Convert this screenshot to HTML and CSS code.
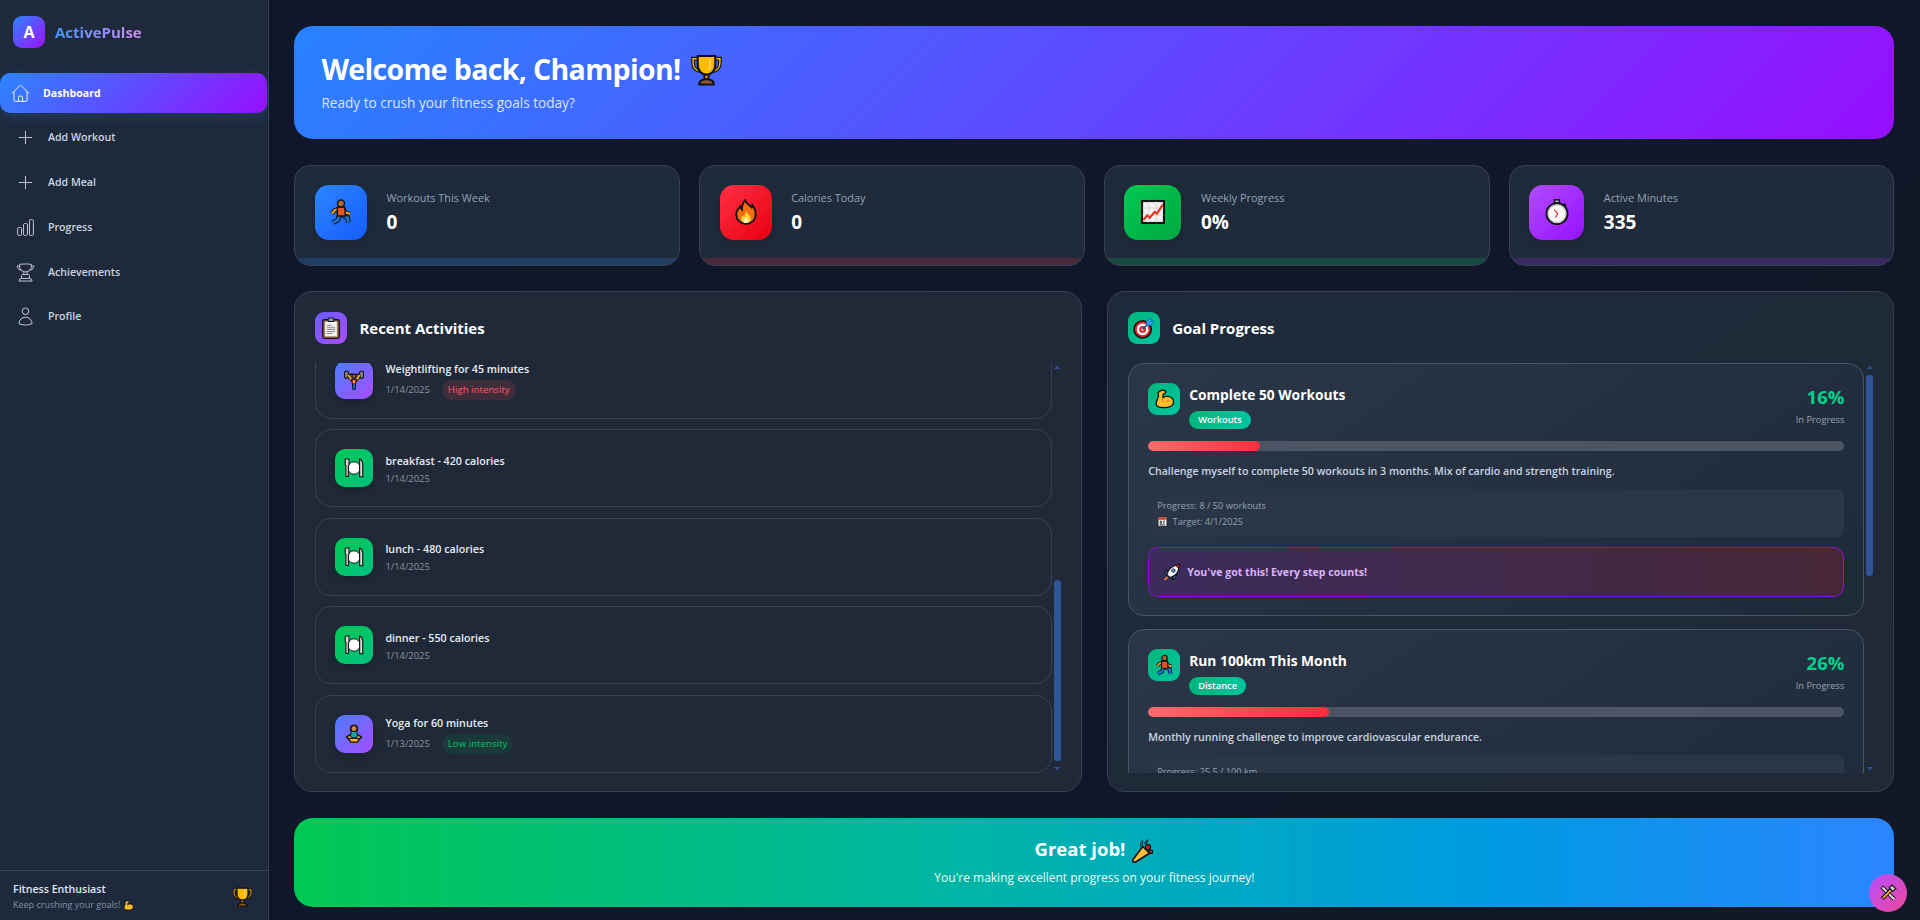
FILE: index.html
```html
<!DOCTYPE html>
<html lang="en">
  <head>
    <meta charset="UTF-8" />
    <meta name="viewport" content="width=device-width, initial-scale=1" />
    <title>ActivePulse</title>
    <link rel="stylesheet" href="styles.css">
  </head>
  <body>
    <!-- Emoji drawn as symbols, no emoji font in the sandbox -->
    <svg class="sprite" aria-hidden="true">
      <symbol id="e-trophy" viewBox="0 0 32 32">
        <path d="M8 5H3v4c0 5 3 8 7 8M24 5h5v4c0 5-3 8-7 8" fill="none" stroke="#111" stroke-width="3.6"/>
        <path d="M8 5H3v4c0 5 3 8 7 8M24 5h5v4c0 5-3 8-7 8" fill="none" stroke="#fcb900" stroke-width="1.4"/>
        <path d="M14 18h4v7h-4z" fill="#e89a00" stroke="#111" stroke-width="1.8"/>
        <path d="M7.5 2.5h17V11c0 6-4 9.5-8.5 9.5S7.5 17 7.5 11z" fill="#fcb900" stroke="#111" stroke-width="2"/>
        <path d="M19.5 5v6c0 2-.6 3.5-1.5 4.5" fill="none" stroke="#ffe28a" stroke-width="1.2"/>
        <path d="M9 30c0-3.5 2.5-5 7-5s7 1.5 7 5z" fill="#8d5a2b" stroke="#111" stroke-width="2"/>
      </symbol>
      <symbol id="e-runner" viewBox="0 0 32 32">
        <path d="M13 12l-5 2-3 4M19 12l3 5 5 1" fill="none" stroke="#111" stroke-width="5"/>
        <path d="M13 12l-5 2-3 4M19 12l3 5 5 1" fill="none" stroke="#f2a31b" stroke-width="2.6"/>
        <path d="M14 20l-2 6-6 3M18 20l6 3 1 6" fill="none" stroke="#111" stroke-width="6"/>
        <path d="M14 20l-2 6-6 3M18 20l6 3 1 6" fill="none" stroke="#1873d3" stroke-width="3.6"/>
        <path d="M11.5 10h9l1 11h-10z" fill="#ea5420" stroke="#111" stroke-width="1.8"/>
        <circle cx="16" cy="5.5" r="4.2" fill="#b06a30" stroke="#111" stroke-width="1.8"/>
      </symbol>
      <symbol id="e-fire" viewBox="0 0 32 32">
        <path d="M15 1.5c1 4 5 6 8 9 1-1 1-2 1-3 3 4 4 8 4 11 0 7-5 12-12 12S4 25.5 4 19c0-4 2-7 5-10 0 2 1 3 2 4 0-5 1-8 4-11.500z" fill="#f26d0f" stroke="#111" stroke-width="2.2"/>
        <path d="M16 15c1 3 6 5 6 10 0 3-3 4.5-6 4.5S10 28 10 25c0-3 2-4 3-5 0 1 .5 2 1 2 .5-2 1-4 2-7z" fill="#ffd23a"/>
        <path d="M16 22c1 2 3 3 3 5 0 1.5-1.5 2.500-3 2.500s-3-1-3-2.500c0-2 2-3 3-5z" fill="#fff3b0"/>
      </symbol>
      <symbol id="e-chart" viewBox="0 0 32 32">
        <rect x="2.5" y="2.5" width="27" height="27" fill="#f2f2f2" stroke="#111" stroke-width="2.6"/>
        <path d="M11 3v26M20 3v26M3 11h26M3 20h26" stroke="#cfcfcf" stroke-width="1"/>
        <path d="M4 26l5-6 3 3 6-7 3 2 7-11" fill="none" stroke="#e5341d" stroke-width="2.6"/>
      </symbol>
      <symbol id="e-watch" viewBox="0 0 32 32">
        <rect x="13" y="1" width="6" height="4" fill="#bdbdbd" stroke="#111" stroke-width="1.8"/>
        <path d="M24 6l2.5 2.5" stroke="#111" stroke-width="3"/>
        <circle cx="16" cy="18" r="13" fill="#c9c9c9" stroke="#111" stroke-width="2.2"/>
        <circle cx="16" cy="18" r="10" fill="#fafafa"/>
        <path d="M12.5 13l4.5 5-3 5" fill="none" stroke="#d8392b" stroke-width="1.4"/>
      </symbol>
      <symbol id="e-clipboard" viewBox="0 0 32 32">
        <rect x="4" y="4" width="24" height="27" rx="2.5" fill="#a97c50" stroke="#111" stroke-width="2"/>
        <rect x="7.5" y="7" width="17" height="21" fill="#f4f4f4"/>
        <path d="M10 12h7M10 15h12M10 18h12M10 21h12M10 24h8" stroke="#8c8c8c" stroke-width="1.5"/>
        <rect x="12" y="1.5" width="8" height="5" rx="1" fill="#9aa0a6" stroke="#111" stroke-width="1.5"/>
      </symbol>
      <symbol id="e-target" viewBox="0 0 32 32">
        <circle cx="14" cy="18" r="12.5" fill="#e3262b" stroke="#111" stroke-width="2.4"/>
        <circle cx="14" cy="18" r="8.5" fill="#fff"/>
        <circle cx="14" cy="18" r="5" fill="#e3262b"/>
        <circle cx="14" cy="18" r="1.8" fill="#fff"/>
        <path d="M14 18L24 8" stroke="#0e5a96" stroke-width="2.4"/>
        <path d="M20 12V6l6-5v5h5l-5 6z" fill="#2aa3ee" stroke="#1672b8" stroke-width="1.2"/>
      </symbol>
      <symbol id="e-lifter" viewBox="0 0 32 32">
        <path d="M5 7h22" stroke="#111" stroke-width="2.4"/>
        <rect x="1" y="2" width="6" height="11" rx="1.5" fill="#8a8a8a" stroke="#111" stroke-width="1.8"/>
        <rect x="25" y="2" width="6" height="11" rx="1.5" fill="#8a8a8a" stroke="#111" stroke-width="1.8"/>
        <path d="M7 8l6 9M25 8l-6 9" stroke="#111" stroke-width="5.4"/>
        <path d="M7 8l6 9M25 8l-6 9" stroke="#f7b524" stroke-width="3"/>
        <circle cx="16" cy="10" r="3.2" fill="#9a5a2a" stroke="#111" stroke-width="1.5"/>
        <path d="M11.5 15h9l-2 7h-5z" fill="#e2262b" stroke="#111" stroke-width="1.5"/>
        <path d="M13.5 22h5l-.5 9h-4z" fill="#1b6fc2" stroke="#111" stroke-width="1.5"/>
        <path d="M16 16.5v5" stroke="#f7d21f" stroke-width="2.4"/>
      </symbol>
      <symbol id="e-plate" viewBox="0 0 32 32">
        <circle cx="16" cy="16" r="10" fill="#fff" stroke="#111" stroke-width="1.6"/>
        <path d="M2 1.5v9c0 1.5 1 2 1 2v17h4v-17s1-.5 1-2v-9z" fill="#d8d8d8" stroke="#111" stroke-width="1.8"/>
        <path d="M25 1.5c3.5 1 5 5 5 10.500v18h-5z" fill="#d8d8d8" stroke="#111" stroke-width="1.8"/>
      </symbol>
      <symbol id="e-yoga" viewBox="0 0 32 32">
        <path d="M16 13L4 21l7 6h10l7-6z" fill="#f7b524" stroke="#111" stroke-width="2.2"/>
        <path d="M11.5 12h9l1 8-5.5 3-5.5-3z" fill="#16a79a" stroke="#111" stroke-width="1.5"/>
        <path d="M10.5 4c1-3 10-3 11 0l.5 7h-12z" fill="#3a2412" stroke="#111" stroke-width="1.5"/>
        <circle cx="16" cy="7.5" r="3.8" fill="#c98a4a"/>
        <path d="M7 24c4-2 14-2 18 0l-4 5H11z" fill="#f7b524" stroke="#111" stroke-width="2"/>
      </symbol>
      <symbol id="e-muscle" viewBox="0 0 32 32">
        <path d="M9 4c3-2 8-2 9 1 0 3-3 3-4 4l-.5 5c3.5-3 10.5-3 14.5 1 3 4 2 10-2 12-6 3-16 3-21 0-2-2-2-6 0-10l2-6-1-3c0-2 1-3 3-4z" fill="#fbbf2d" stroke="#111" stroke-width="2"/>
        <path d="M13.5 14c-1 3-1 5 0 7M18 20c2-1.5 5-1.5 7 0" fill="none" stroke="#c98800" stroke-width="1.5"/>
      </symbol>
      <symbol id="e-rocket" viewBox="0 0 32 32">
        <path d="M9 13L3 16l3 6 3-2zM19 23l-3 6 6-2 2-6z" fill="#2a7fd4" stroke="#111" stroke-width="1.8"/>
        <path d="M7 21C8 12 16 4 29 3c0 13-7 20-16 23z" fill="#f6f6f6" stroke="#111" stroke-width="2"/>
        <path d="M22 3.8c2-.5 4.5-.8 7-.8 0 2.5-.3 5-.9 7.300z" fill="#e3262b" stroke="#111" stroke-width="1.5"/>
        <circle cx="18.5" cy="13.5" r="3" fill="#4aa8ef" stroke="#111" stroke-width="1.5"/>
        <path d="M8 25l-5 5" stroke="#f28a1b" stroke-width="3.4"/>
      </symbol>
      <symbol id="e-calendar" viewBox="0 0 32 32">
        <rect x="3" y="3" width="26" height="27" fill="#f4f4f4" stroke="#222" stroke-width="2.4"/>
        <rect x="4" y="4" width="24" height="7" fill="#d8392b"/>
        <path d="M8 15h5v3.5H8M13 18.5V23H8M18 15h5M20 15v8M8 26h16" fill="none" stroke="#222" stroke-width="2.4"/>
      </symbol>
      <symbol id="e-popper" viewBox="0 0 32 32">
        <path d="M17 10l9 9L7 31c-2.5.5-4-1-3-3.5z" fill="#fbbf3a" stroke="#111" stroke-width="2.2"/>
        <circle cx="24" cy="11" r="3.4" fill="#c81e24" stroke="#111" stroke-width="1.6"/>
        <circle cx="28" cy="17" r="2.4" fill="#c81e24" stroke="#111" stroke-width="1.4"/>
        <path d="M15 10c-1-3 2-4 1-8M20 7c1-3 3-3 3-6" fill="none" stroke="#111" stroke-width="3.2"/>
        <path d="M15 10c-1-3 2-4 1-8M20 7c1-3 3-3 3-6" fill="none" stroke="#1d9bd8" stroke-width="1.2"/>
      </symbol>
      <symbol id="e-tools" viewBox="0 0 32 32">
        <path d="M5 5l22 22" stroke="#111" stroke-width="7"/>
        <path d="M6 6l21 21" stroke="#e2e2e2" stroke-width="3.6"/>
        <path d="M24 7L6 26" stroke="#111" stroke-width="6.6"/>
        <path d="M23 9L7 25" stroke="#f2a31b" stroke-width="3.4"/>
        <path d="M18 7l5-5 7 6-5 5z" fill="#c9c9c9" stroke="#111" stroke-width="2"/>
      </symbol>
    </svg>

    <div class="app">
      <aside class="sidebar">
        <div class="brand">
          <div class="brand-mark">A</div>
          <span class="brand-name">ActivePulse</span>
        </div>

        <nav class="nav">
          <a class="nav-item active" href="#">
            <svg class="nav-icon" viewBox="0 0 24 24"><path d="M2.25 12l8.954-8.955c.44-.439 1.152-.439 1.591 0L21.75 12M4.5 9.75v10.125c0 .621.504 1.125 1.125 1.125H9.75v-4.875c0-.621.504-1.125 1.125-1.125h2.25c.621 0 1.125.504 1.125 1.125V21h4.125c.621 0 1.125-.504 1.125-1.125V9.75M8.25 21h8.25"/></svg>
            <span>Dashboard</span>
          </a>
          <a class="nav-item" href="#">
            <svg class="nav-icon" viewBox="0 0 24 24"><path d="M12 4.5v15m7.5-7.5h-15"/></svg>
            <span>Add Workout</span>
          </a>
          <a class="nav-item" href="#">
            <svg class="nav-icon" viewBox="0 0 24 24"><path d="M12 4.5v15m7.5-7.5h-15"/></svg>
            <span>Add Meal</span>
          </a>
          <a class="nav-item" href="#">
            <svg class="nav-icon" viewBox="0 0 24 24"><path d="M3 13.125C3 12.504 3.504 12 4.125 12h2.25c.621 0 1.125.504 1.125 1.125v6.75C7.5 20.496 6.996 21 6.375 21h-2.25A1.125 1.125 0 013 19.875v-6.75zM9.75 8.625c0-.621.504-1.125 1.125-1.125h2.25c.621 0 1.125.504 1.125 1.125v11.25c0 .621-.504 1.125-1.125 1.125h-2.25a1.125 1.125 0 01-1.125-1.125V8.625zM16.5 4.125c0-.621.504-1.125 1.125-1.125h2.25C20.496 3 21 3.504 21 4.125v15.75c0 .621-.504 1.125-1.125 1.125h-2.25a1.125 1.125 0 01-1.125-1.125V4.125z"/></svg>
            <span>Progress</span>
          </a>
          <a class="nav-item" href="#">
            <svg class="nav-icon" viewBox="0 0 24 24"><path d="M16.5 18.75h-9m9 0a3 3 0 013 3h-15a3 3 0 013-3m9 0v-3.375c0-.621-.503-1.125-1.125-1.125h-.871M7.5 18.75v-3.375c0-.621.504-1.125 1.125-1.125h.872m5.007 0H9.497m5.007 0a7.454 7.454 0 01-.982-3.172M9.497 14.25a7.454 7.454 0 00.981-3.172M5.25 4.236c-.982.143-1.954.317-2.916.52A6.003 6.003 0 007.73 9.728M5.25 4.236V4.5c0 2.108.966 3.99 2.48 5.228M5.25 4.236V2.721C7.456 2.41 9.71 2.25 12 2.25c2.291 0 4.545.16 6.75.47v1.516M7.73 9.728a6.726 6.726 0 002.748 1.35m8.272-6.842V4.5c0 2.108-.966 3.99-2.48 5.228m2.48-5.492a46.32 46.32 0 012.916.52 6.003 6.003 0 01-5.395 4.972m0 0a6.726 6.726 0 01-2.749 1.35m0 0a6.772 6.772 0 01-3.044 0"/></svg>
            <span>Achievements</span>
          </a>
          <a class="nav-item" href="#">
            <svg class="nav-icon" viewBox="0 0 24 24"><path d="M15.75 6a3.75 3.75 0 11-7.5 0 3.75 3.75 0 017.5 0zM4.501 20.118a7.5 7.5 0 0114.998 0A17.933 17.933 0 0112 21.75c-2.676 0-5.216-.584-7.499-1.632z"/></svg>
            <span>Profile</span>
          </a>
        </nav>

        <div class="sidebar-footer">
          <div>
            <div class="user-name">Fitness Enthusiast</div>
            <div class="user-note">Keep crushing your goals! <svg class="emoji em-11"><use href="#e-muscle"/></svg></div>
          </div>
          <svg class="emoji em-21"><use href="#e-trophy"/></svg>
        </div>
      </aside>

      <main class="main">
        <section class="hero">
          <h1>Welcome back, Champion! <svg class="emoji em-32"><use href="#e-trophy"/></svg></h1>
          <p>Ready to crush your fitness goals today?</p>
        </section>

        <section class="stats">
          <div class="stat blue">
            <div class="stat-icon"><svg class="emoji em-26"><use href="#e-runner"/></svg></div>
            <div>
              <div class="stat-label">Workouts This Week</div>
              <div class="stat-value">0</div>
            </div>
          </div>
          <div class="stat red">
            <div class="stat-icon"><svg class="emoji em-26"><use href="#e-fire"/></svg></div>
            <div>
              <div class="stat-label">Calories Today</div>
              <div class="stat-value">0</div>
            </div>
          </div>
          <div class="stat green">
            <div class="stat-icon"><svg class="emoji em-26"><use href="#e-chart"/></svg></div>
            <div>
              <div class="stat-label">Weekly Progress</div>
              <div class="stat-value">0%</div>
            </div>
          </div>
          <div class="stat purple">
            <div class="stat-icon"><svg class="emoji em-26"><use href="#e-watch"/></svg></div>
            <div>
              <div class="stat-label">Active Minutes</div>
              <div class="stat-value">335</div>
            </div>
          </div>
        </section>

        <section class="panels">
          <div class="panel">
            <div class="panel-head">
              <div class="panel-icon violet"><svg class="emoji em-22"><use href="#e-clipboard"/></svg></div>
              <h2>Recent Activities</h2>
            </div>
            <div class="scroll-area">
              <div class="scroll-clip">
                <ul class="activities">
                  <li class="activity">
                    <div class="activity-icon violet"><svg class="emoji em-20"><use href="#e-lifter"/></svg></div>
                    <div class="activity-text">
                      <div class="activity-title">Weightlifting for 45 minutes</div>
                      <div class="activity-meta">1/14/2025 <span class="badge high">High intensity</span></div>
                    </div>
                  </li>
                  <li class="activity">
                    <div class="activity-icon meal"><svg class="emoji em-20"><use href="#e-plate"/></svg></div>
                    <div class="activity-text">
                      <div class="activity-title">breakfast - 420 calories</div>
                      <div class="activity-meta">1/14/2025</div>
                    </div>
                  </li>
                  <li class="activity">
                    <div class="activity-icon meal"><svg class="emoji em-20"><use href="#e-plate"/></svg></div>
                    <div class="activity-text">
                      <div class="activity-title">lunch - 480 calories</div>
                      <div class="activity-meta">1/14/2025</div>
                    </div>
                  </li>
                  <li class="activity">
                    <div class="activity-icon meal"><svg class="emoji em-20"><use href="#e-plate"/></svg></div>
                    <div class="activity-text">
                      <div class="activity-title">dinner - 550 calories</div>
                      <div class="activity-meta">1/14/2025</div>
                    </div>
                  </li>
                  <li class="activity">
                    <div class="activity-icon violet"><svg class="emoji em-20"><use href="#e-yoga"/></svg></div>
                    <div class="activity-text">
                      <div class="activity-title">Yoga for 60 minutes</div>
                      <div class="activity-meta">1/13/2025 <span class="badge low">Low intensity</span></div>
                    </div>
                  </li>
                </ul>
              </div>
              <div class="scrollbar">
                <div class="arrow-up"></div>
                <div class="thumb-slot"><div class="thumb thumb-activities"></div></div>
                <div class="arrow-down"></div>
              </div>
            </div>
          </div>

          <div class="panel goals-panel">
            <div class="panel-head">
              <div class="panel-icon teal"><svg class="emoji em-22"><use href="#e-target"/></svg></div>
              <h2>Goal Progress</h2>
            </div>
            <div class="scroll-area">
              <div class="scroll-clip">
                <article class="goal">
                  <div class="goal-top">
                    <div class="goal-icon"><svg class="emoji em-21"><use href="#e-muscle"/></svg></div>
                    <div class="goal-name">
                      <h3>Complete 50 Workouts</h3>
                      <span class="tag">Workouts</span>
                    </div>
                    <div class="goal-score">
                      <div class="goal-pct">16%</div>
                      <div class="goal-state">In Progress</div>
                    </div>
                  </div>
                  <div class="bar"><div class="bar-fill" style="width: 16%"></div></div>
                  <p class="goal-desc">Challenge myself to complete 50 workouts in 3 months. Mix of cardio and strength training.</p>
                  <div class="goal-info">
                    <div>Progress: 8 / 50 workouts</div>
                    <div class="goal-date"><svg class="emoji em-11"><use href="#e-calendar"/></svg> Target: 4/1/2025</div>
                  </div>
                  <div class="cheer"><svg class="emoji em-18"><use href="#e-rocket"/></svg> You've got this! Every step counts!</div>
                </article>
                <article class="goal">
                  <div class="goal-top">
                    <div class="goal-icon"><svg class="emoji em-21"><use href="#e-runner"/></svg></div>
                    <div class="goal-name">
                      <h3>Run 100km This Month</h3>
                      <span class="tag">Distance</span>
                    </div>
                    <div class="goal-score">
                      <div class="goal-pct">26%</div>
                      <div class="goal-state">In Progress</div>
                    </div>
                  </div>
                  <div class="bar"><div class="bar-fill" style="width: 26%"></div></div>
                  <p class="goal-desc">Monthly running challenge to improve cardiovascular endurance.</p>
                  <div class="goal-info">
                    <div>Progress: 25.5 / 100 km</div>
                  </div>
                </article>
              </div>
              <div class="scrollbar">
                <div class="arrow-up"></div>
                <div class="thumb-slot"><div class="thumb thumb-goals"></div></div>
                <div class="arrow-down"></div>
              </div>
            </div>
          </div>
        </section>

        <section class="cheer-banner">
          <h2>Great job! <svg class="emoji em-24"><use href="#e-popper"/></svg></h2>
          <p>You're making excellent progress on your fitness journey!</p>
        </section>
      </main>
    </div>

    <button class="fab" aria-label="Tools"><svg class="emoji em-18"><use href="#e-tools"/></svg></button>
  </body>
</html>
```

FILE: styles.css
```css
/* Reset */
* {
  margin: 0;
  padding: 0;
  box-sizing: border-box;
}
html,
body {
  height: 100%;
  overflow: hidden;
  font-family: "Open Sans", "Noto Sans", sans-serif;
  background: #111827;
  color: #fff;
}
.sprite {
  display: none;
}
.emoji {
  display: inline-block;
  vertical-align: middle;
  flex-shrink: 0;
}
.em-11 { width: 11px; height: 11px; }
.em-18 { width: 18px; height: 18px; }
.em-20 { width: 20px; height: 20px; }
.em-21 { width: 21px; height: 22px; }
.em-22 { width: 22px; height: 22px; }
.em-24 { width: 24px; height: 24px; }
.em-26 { width: 26px; height: 26px; }
.em-32 { width: 33px; height: 34px; }

.app {
  display: flex;
  height: 100%;
}

/* Sidebar */
.sidebar {
  display: flex;
  flex-direction: column;
  width: 269px;
  flex-shrink: 0;
  background: #1e293b;
  border-right: 1px solid #374151;
}
.brand {
  display: flex;
  align-items: center;
  gap: 10px;
  padding: 16px 13px 25px;
}
.brand-mark {
  display: flex;
  align-items: center;
  justify-content: center;
  width: 32px;
  height: 32px;
  border-radius: 9px;
  background: linear-gradient(135deg, #2b85ff, #a010ff);
  font-size: 16px;
  font-weight: 700;
}
.brand-name {
  font-size: 15px;
  font-weight: 700;
  background: linear-gradient(90deg, #3f97ff, #d68cf5);
  -webkit-background-clip: text;
  background-clip: text;
  color: transparent;
}
.nav {
  display: flex;
  flex-direction: column;
  gap: 4.8px;
}
.nav-item {
  display: flex;
  align-items: center;
  gap: 12px;
  height: 40px;
  padding-left: 15px;
  font-size: 10.6px;
  font-weight: 600;
  color: #cbd5e1;
  text-decoration: none;
}
.nav-item span {
  padding-bottom: 1px;
}
.nav-icon {
  width: 21px;
  height: 21px;
  fill: none;
  stroke: #d7dde6;
  stroke-width: 1;
}
.nav-item.active {
  gap: 12px;
  padding-left: 10px;
  margin-right: 1px;
  border-radius: 10px;
  background: linear-gradient(135deg, #2b85ff, #960fff);
  color: #fff;
  font-weight: 700;
  box-shadow: 0 4px 14px rgba(43, 133, 255, 0.2);
}
.nav-item.active .nav-icon {
  stroke: #fff;
}
.sidebar-footer {
  display: flex;
  align-items: center;
  justify-content: space-between;
  margin-top: auto;
  height: 50px;
  padding: 2px 15px 0 13px;
  border-top: 1px solid #374151;
}
.user-name {
  font-size: 10.6px;
  font-weight: 600;
  color: #e2e8f0;
  line-height: 15px;
}
.user-note {
  font-size: 9px;
  color: #7f93aa;
  line-height: 15px;
}

/* Main content */
.main {
  flex: 1;
  display: flex;
  flex-direction: column;
  gap: 25.6px;
  padding: 26px 25.6px 0 25.4px;
  min-width: 0;
  background: linear-gradient(135deg, #0f172a, #111827);
}
.hero {
  height: 113.4px;
  padding: 25px 27px 0;
  border-radius: 19px;
  background: linear-gradient(135deg, #2783ff, #960fff);
}
.hero h1 {
  font-size: 28.5px;
  font-weight: 700;
  letter-spacing: -0.65px;
  line-height: 36px;
}
.hero h1 .emoji {
  margin-left: 3px;
  vertical-align: -7px;
}
.hero p {
  margin-top: 7px;
  font-size: 13.6px;
  line-height: 18px;
  color: #dbe4ff;
}

/* Stat cards */
.stats {
  display: grid;
  grid-template-columns: repeat(4, 1fr);
  gap: 19.2px;
}
.stat {
  position: relative;
  display: flex;
  align-items: center;
  gap: 19.5px;
  height: 100.8px;
  padding: 0 20px 6px 19.5px;
  overflow: hidden;
  border: 1px solid #374151;
  border-radius: 16px;
  background: #1f2a3a;
}
.stat::after {
  content: "";
  position: absolute;
  left: 0;
  right: 0;
  bottom: 0;
  height: 6.4px;
  opacity: 0.2;
}
.stat-icon {
  display: flex;
  align-items: center;
  justify-content: center;
  height: 55px;
  border-radius: 14px;
  box-shadow: 0 4px 10px rgba(0, 0, 0, 0.15);
}
.stat.blue .stat-icon { width: 52px; background: linear-gradient(135deg, #2b85ff, #155dfc); }
.stat.red .stat-icon { width: 52px; background: linear-gradient(135deg, #ff2f45, #e8000f); }
.stat.green .stat-icon { width: 57px; background: linear-gradient(135deg, #00c853, #00a83f); }
.stat.purple .stat-icon { width: 55px; background: linear-gradient(135deg, #b04cff, #9510ff); }
.stat.blue::after { background: #2b85ff; }
.stat.red::after { background: #ff2f45; }
.stat.green::after { background: #00c853; }
.stat.purple::after { background: #a030ff; }
.stat-label {
  font-size: 10.9px;
  color: #94a3b8;
  line-height: 16px;
  margin-top: 1px;
  margin-bottom: 3px;
}
.stat-value {
  font-size: 19px;
  font-weight: 700;
  line-height: 26px;
}

/* Panels */
.panels {
  display: grid;
  grid-template-columns: 1fr 1fr;
  gap: 25.6px;
}
.panel {
  display: flex;
  flex-direction: column;
  height: 501px;
  padding: 20px 20px 0;
  border: 1px solid #374151;
  border-radius: 18px;
  background: #1f2937;
}
.goals-panel {
  background: linear-gradient(145deg, #1e2a3a, #1f2937);
}
.panel-head {
  display: flex;
  align-items: center;
  gap: 12px;
  height: 32px;
  margin-bottom: 19px;
}
.panel-head h2 {
  font-size: 15px;
  font-weight: 700;
}
.panel-icon {
  display: flex;
  align-items: center;
  justify-content: center;
  width: 32px;
  height: 32px;
  border-radius: 9px;
}
.violet { background: linear-gradient(135deg, #4a7dff, #a84dff); }
.teal { background: linear-gradient(135deg, #00b67a, #00c4a0); }
.meal { background: linear-gradient(135deg, #00c853, #00c080); }
.panel-icon.violet { background: linear-gradient(135deg, #6a5cff, #a84dff); }

/* Fake scrollbars, the headless browser hides the real ones */
.scroll-area {
  display: flex;
  gap: 2px;
  height: 410px;
}
.scroll-clip {
  flex: 1;
  min-width: 0;
  overflow: hidden;
}
.scrollbar {
  display: flex;
  flex-direction: column;
  align-items: center;
  width: 7px;
  padding: 3px 0;
}
.thumb-slot {
  position: relative;
  flex: 1;
  width: 100%;
  margin: 3px 0;
}
.thumb {
  position: absolute;
  left: 0;
  right: 0;
  border-radius: 3px;
  background: #2f5596;
}
.thumb-activities { top: 208px; bottom: 3px; }
.thumb-goals { top: 3px; height: 201px; }
.arrow-up,
.arrow-down {
  width: 0;
  height: 0;
  border-left: 3px solid transparent;
  border-right: 3px solid transparent;
}
.arrow-up { border-bottom: 3px solid #2f5596; }
.arrow-down { border-top: 3px solid #2f5596; }

/* Activity list */
.activities {
  list-style: none;
  display: flex;
  flex-direction: column;
  gap: 10.5px;
  margin-top: -22.5px;
}
.activity {
  display: flex;
  align-items: center;
  gap: 12px;
  height: 78px;
  padding: 0 19px;
  border: 1px solid #374151;
  border-radius: 16px;
}
.activity-icon {
  display: flex;
  align-items: center;
  justify-content: center;
  width: 38px;
  height: 38px;
  border-radius: 10px;
  box-shadow: 0 4px 8px rgba(0, 0, 0, 0.15);
}
.activity-text {
  padding-top: 2px;
}
.activity-title {
  font-size: 10.7px;
  font-weight: 600;
  color: #e8edf3;
  line-height: 16px;
}
.activity-meta {
  display: flex;
  align-items: center;
  gap: 12px;
  margin-top: 3px;
  font-size: 9.4px;
  color: #8b95a3;
  line-height: 14px;
}
.badge {
  height: 20px;
  padding: 0 6px;
  border-radius: 10px;
  font-size: 9.7px;
  line-height: 20px;
  font-weight: 500;
}
.badge.high { background: rgba(255, 71, 87, 0.15); color: #ff5a66; }
.badge.low { background: rgba(0, 200, 100, 0.1); color: #00c864; }

/* Goals */
.goal {
  height: 253px;
  margin-bottom: 13px;
  padding: 19px 19px 0;
  border: 1px solid #4b5563;
  border-radius: 16px;
  background: linear-gradient(145deg, #2b3748, #1e2a38);
}
.goal-top {
  display: flex;
  align-items: flex-start;
  gap: 9px;
}
.goal-icon {
  display: flex;
  align-items: center;
  justify-content: center;
  width: 32px;
  height: 32px;
  flex-shrink: 0;
  border-radius: 9px;
  background: linear-gradient(135deg, #00b67a, #00c4a0);
}
.goal-name {
  flex: 1;
}
.goal-name h3 {
  font-size: 13.8px;
  font-weight: 700;
  line-height: 20px;
  margin-top: 2px;
}
.tag {
  display: inline-block;
  margin-top: 6px;
  padding: 0 9px;
  height: 18px;
  border-radius: 9px;
  background: linear-gradient(90deg, #00b67a, #00c4a0);
  font-size: 9.3px;
  font-weight: 600;
  line-height: 18px;
}
.goal-score {
  text-align: right;
}
.goal-pct {
  font-size: 18.5px;
  font-weight: 700;
  color: #00d08e;
  line-height: 24px;
  margin-top: 2px;
}
.goal-state {
  margin-top: 4px;
  font-size: 9.3px;
  color: #94a3b8;
  line-height: 14px;
}
.bar {
  height: 10px;
  margin-top: 12px;
  border-radius: 5px;
  background: #4b5563;
  overflow: hidden;
}
.bar-fill {
  height: 100%;
  border-radius: 5px;
  background: linear-gradient(90deg, #ff6b6b, #ff2d3d);
}
.goal-desc {
  margin-top: 12px;
  font-size: 10.6px;
  font-weight: 600;
  color: #cbd5e1;
  line-height: 16px;
}
.goal-info {
  height: 48px;
  margin-top: 10px;
  padding: 9px 9px;
  border-radius: 7px;
  background: #2a3545;
  font-size: 9.2px;
  color: #94a3b8;
  line-height: 16px;
}
.goal-date .emoji {
  vertical-align: -2px;
  margin-right: 2px;
}
.cheer {
  display: flex;
  align-items: center;
  gap: 6px;
  height: 50px;
  margin-top: 10px;
  padding-left: 14px;
  border: 1px solid #8a10d8;
  border-radius: 10px;
  background: linear-gradient(90deg, #3c2c5c, #472737);
  font-size: 10.6px;
  font-weight: 700;
  color: #d8b4fe;
}

/* Bottom banner */
.cheer-banner {
  height: 89.5px;
  padding-top: 16px;
  border-radius: 19px;
  text-align: center;
  background: linear-gradient(90deg, #00c853 0%, #00b6a2 40%, #009ae2 75%, #2b85ff 100%);
}
.cheer-banner h2 {
  font-size: 18.5px;
  font-weight: 700;
  line-height: 30px;
}
.cheer-banner p {
  margin-top: 5px;
  font-size: 12px;
  line-height: 18px;
  color: #eafff4;
}

.fab {
  position: fixed;
  right: 13px;
  bottom: 8px;
  display: flex;
  align-items: center;
  justify-content: center;
  width: 38px;
  height: 38px;
  border: none;
  border-radius: 50%;
  background: linear-gradient(135deg, #b84dff, #ec4899);
}
```
